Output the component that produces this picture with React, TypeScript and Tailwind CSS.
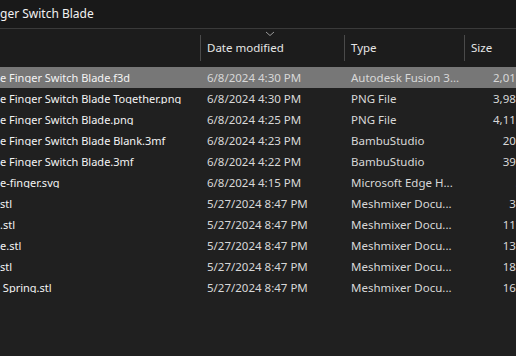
const rows = [
  { name: 'e Finger Switch Blade.f3d', date: '6/8/2024 4:30 PM', type: 'Autodesk Fusion 3...', size: '2,015 KB', selected: true },
  { name: 'e Finger Switch Blade Together.png', date: '6/8/2024 4:30 PM', type: 'PNG File', size: '3,988 KB' },
  { name: 'e Finger Switch Blade.png', date: '6/8/2024 4:25 PM', type: 'PNG File', size: '4,113 KB' },
  { name: 'e Finger Switch Blade Blank.3mf', date: '6/8/2024 4:23 PM', type: 'BambuStudio', size: '205 KB' },
  { name: 'e Finger Switch Blade.3mf', date: '6/8/2024 4:22 PM', type: 'BambuStudio', size: '395 KB' },
  { name: 'e-finger.svg', date: '6/8/2024 4:15 PM', type: 'Microsoft Edge H...', size: '3 KB' },
  { name: 'stl', date: '5/27/2024 8:47 PM', type: 'Meshmixer Docu...', size: '38 KB' },
  { name: '.stl', date: '5/27/2024 8:47 PM', type: 'Meshmixer Docu...', size: '117 KB' },
  { name: 'e.stl', date: '5/27/2024 8:47 PM', type: 'Meshmixer Docu...', size: '135 KB' },
  { name: 'stl', date: '5/27/2024 8:47 PM', type: 'Meshmixer Docu...', size: '183 KB' },
  { name: '\u00a0Spring.stl', date: '5/27/2024 8:47 PM', type: 'Meshmixer Docu...', size: '162 KB' },
];

export default function App() {
  return (
    <div
      className="w-[516px] h-[356px] overflow-hidden bg-[#202020] text-[11.5px] leading-none"
      style={{ fontFamily: '"Noto Sans", "Open Sans", sans-serif' }}
    >
      <div className="w-[560px]">
        <div className="h-[28px] bg-[#191919] flex items-center text-[#f2f2f2] text-[12px]">
          ger Switch Blade
        </div>
        <div className="h-px bg-[#3a3a3a]" />
        <div className="h-[38px] bg-[#1c1c1c] grid grid-cols-[200px_144px_120px_96px] items-center text-[#e6e6e6]">
          <div />
          <div className="relative h-[26px] border-l border-[#4a4a4a] pl-[6px] flex items-center">
            Date modified
            <svg className="absolute left-[64px] top-[-4px]" width="10" height="6" viewBox="0 0 10 6">
              <path d="M1 1 L5 4.5 L9 1" fill="none" stroke="#9a9a9a" strokeWidth="1" />
            </svg>
          </div>
          <div className="h-[26px] border-l border-[#4a4a4a] pl-[6px] flex items-center">Type</div>
          <div className="h-[26px] border-l border-[#4a4a4a] pl-[6px] flex items-center">Size</div>
        </div>
        <div className="flex flex-col">
          {rows.map((r, i) => (
            <div
              key={i}
              className={
                'h-[21px] grid grid-cols-[200px_144px_120px_96px] items-center ' +
                (r.selected ? 'bg-[#777777]' : '')
              }
            >
              <div className="text-[11px] text-[#f4f4f4] whitespace-nowrap overflow-hidden">{r.name}</div>
              <div className="pl-[7px] text-[#d8d8d8] whitespace-nowrap">{r.date}</div>
              <div className="pl-[7px] text-[#d8d8d8] whitespace-nowrap">{r.type}</div>
              <div className="pr-[20px] text-right text-[#d8d8d8] whitespace-nowrap">{r.size}</div>
            </div>
          ))}
        </div>
      </div>
    </div>
  );
}
